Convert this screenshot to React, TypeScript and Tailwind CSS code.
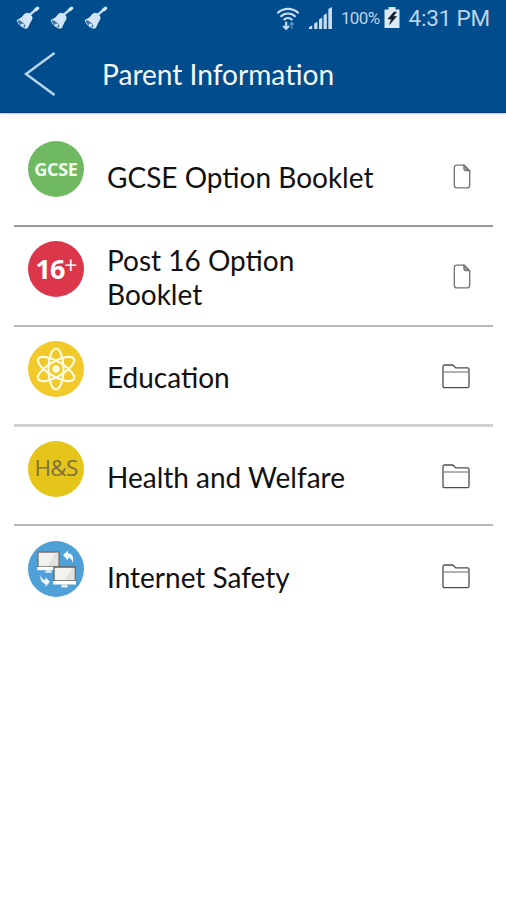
import React from 'react';
import { clsx } from 'clsx';

type RowProps = {
  label: string;
  kind: 'file' | 'folder';
  /** colour of the round badge */
  badgeClass: string;
  dividerClass?: string;
  children: React.ReactNode;
};

const Bell = () => (
  <svg width="24" height="24" viewBox="0 0 24 24" className="block">
    <path d="m13.500 9 7-6" stroke="#c5daee" strokeWidth="2.400" />
    <path d="m20 3.500 1.500-1.300" stroke="#d3e6f5" strokeWidth="3.400" strokeLinecap="round" />
    <path
      d="M.7 14C4.500 12.500 6.500 10.500 8 8.200Q10.500 5.700 13 7.300L16 10q1.500 2.200-.3 4.500c-2 2.500-2.200 4.500-3.700 7.300Q9 24 5 20.500 1 17 .7 14z"
      fill="#d3e6f5"
    />
    <ellipse cx="5.600" cy="17.800" rx="4.800" ry="1.800" transform="rotate(42 5.600 17.800)" fill="#47759e" />
    <circle cx="6.400" cy="19.200" r="1.600" fill="#d3e6f5" />
  </svg>
);

const Wifi = () => (
  <svg width="24" height="25" viewBox="0 0 26 26" fill="none" stroke="#c9dcf0" strokeWidth="2.300">
    <path d="M1.500 7.200c6.500-6.200 16.500-6.200 23 0" />
    <path d="M4.800 11c4.800-4.600 11.600-4.600 16.400 0" />
    <path d="M8.200 14.600c2.900-2.600 6.700-2.600 9.600 0" />
    <path d="M11 16.500V24M7.800 21.200l3.200 3 3.200-3" />
    <path d="M17 24v-6.500M14.800 19.700l2.200-2.200 2.200 2.200" stroke="#5d8cba" strokeWidth="1.600" />
  </svg>
);

const Signal = () => (
  <svg width="23" height="22" viewBox="0 0 23 22" fill="#c9dcf0">
    <path d="M0 22v-2l3.200-1.500V22zM5.200 22v-5.500l3.200-1.700V22zM10 22v-9.500l3.200-2V22zM14.600 22V8.300l3.200-2V22zM19.300 22V2L23 0v22z" />
  </svg>
);

const Battery = () => (
  <svg width="16" height="22" viewBox="0 0 16 22">
    <path d="M4.500 0h7v2.500H15.500V21H.5V2.500h4z" fill="#dceaf5" />
    <path d="M10 5 4 12h3.500L5.500 17.500l7-8H9L12.500 5z" fill="#101b26" stroke="#101b26" strokeWidth=".6" />
  </svg>
);

const FileIcon = () => (
  <svg width="18" height="25" viewBox="0 0 18 26" fill="none" stroke="#757575" strokeWidth="1.400">
    <path d="M11.500 1.200H3.800Q1 1.200 1 4v18q0 2.800 2.800 2.800h10.400Q17 24.800 17 22V7z" />
    <path d="m11 1.500 5.500 5.300h-3.300Q11 6.800 11 4.500z" fill="#aaa" />
  </svg>
);

const FolderIcon = () => (
  <svg width="28" height="25" viewBox="0 0 28 25" fill="none" stroke="#4d4d4d" strokeWidth="1.300">
    <path d="M1 22.200V2.500q0-1.500 1.500-1.500H10q1.200 0 2 1l1.700 1.900H25.500q1.500 0 1.500 1.600v16.700q0 1.500-1.500 1.500h-23Q1 23.700 1 22.200z" />
    <path d="M1 8h26" stroke="#888" />
  </svg>
);

const Atom = () => (
  <svg width="48" height="48" viewBox="-24 -24 48 48" fill="none" stroke="#fffbe0" strokeWidth="2.200">
    <ellipse rx="7.500" ry="20.500" />
    <ellipse rx="7.500" ry="20.500" transform="rotate(60)" />
    <ellipse rx="7.500" ry="20.500" transform="rotate(120)" />
    <circle r="3.700" fill="#fffbe0" stroke="none" />
  </svg>
);

const Computers = () => (
  <svg width="56" height="56" viewBox="0 0 56 56">
    <g>
      <path d="M10 11h21v15H10z" fill="#f2f2ee" stroke="#77736f" strokeWidth="1.300" />
      <path d="M9.300 26h22.400v3.200H9.300z" fill="#fff" />
      <path d="M18 29.200h5l1 2.500h-7z" fill="#e9edf0" />
      <path d="M20 25 27 11.700h3V25z" fill="#e2e2df" />
    </g>
    <g>
      <path d="M26 26h21v14H26z" fill="#f2f2ee" stroke="#66605c" strokeWidth="1.300" />
      <path d="M25 40h23v3.500H25z" fill="#fff" />
      <path d="M34 43.500h5l1 3h-7z" fill="#e9edf0" />
      <path d="m37 39 7-12h2.500v12z" fill="#e2e2df" />
    </g>
    <g fill="#f2faff">
      <path d="m35 14 5-4.500v2.700c4.500.3 6 4 4.500 9.800-.5-3.500-2-5-4.500-5.200v2.700z" />
      <path d="M12.500 34c-.5 5 1.700 8.300 5 8.800v3l4.500-5-4.500-4.400v2.700c-2.500-.3-4-1.800-5-5.100z" />
    </g>
  </svg>
);

const Row: React.FC<RowProps> = ({ label, kind, badgeClass, dividerClass, children }) => (
  <li className="h-[100px]">
    <div className="flex h-[98px] items-center">
      <div
        className={clsx(
          'mb-[14px] ml-[14px] flex h-14 w-14 shrink-0 items-center justify-center rounded-full',
          badgeClass
        )}
      >
        {children}
      </div>
      <span className="mt-[2px] ml-[23px] w-[275px] text-[28px] leading-[34px] text-[#111]">{label}</span>
      <span className={clsx('ml-auto', kind === 'file' ? 'mr-[22px]' : 'mr-[23px]')}>
        {kind === 'file' ? <FileIcon /> : <FolderIcon />}
      </span>
    </div>
    <div className={dividerClass} />
  </li>
);

const App: React.FC = () => (
  <div className="h-[900px] w-[506px] overflow-hidden bg-white font-['Lato',sans-serif]">
    <header className="h-[113px] border-b border-[#063783] bg-[#004c8c] shadow-[0_1px_2px_rgba(60,60,80,0.3)]">
      <div className="flex h-9 items-center justify-between pr-4 pl-4">
        <div className="flex gap-[10px]">
          <Bell />
          <Bell />
          <Bell />
        </div>
        <div className="flex items-center font-['Roboto',sans-serif] text-[#bdd3ea]">
          <Wifi />
          <span className="ml-[9px]">
            <Signal />
          </span>
          <span className="mt-px ml-[9px] text-[17px] tracking-[-0.6px]">100%</span>
          <span className="ml-1 mr-px">
            <Battery />
          </span>
          <span className="mt-px ml-2 text-[22.500px] tracking-[-0.2px]">4:31 PM</span>
        </div>
      </div>
      <div className="flex h-[76px] items-center">
        <svg width="32" height="46" viewBox="0 0 32 46" className="ml-6" fill="none" stroke="#b9d8ef" strokeWidth="2.500">
          <path d="M30.500 2 2 23l28.500 21" />
        </svg>
        <h1 className="mt-px ml-[46px] text-[28.100px] text-[#f4f9ff]">Parent Information</h1>
      </div>
    </header>
    <main className="pr-[13px] pl-[14px] pt-[14px]">
      <ul>
        <Row label="GCSE Option Booklet" kind="file" badgeClass="bg-[#70b963]" dividerClass="h-[2px] bg-[#999]">
          <span className="font-['Open_Sans',sans-serif] text-[18px] font-bold tracking-[-0.3px] text-[#f5fff0]">GCSE</span>
        </Row>
        <Row label="Post 16 Option Booklet" kind="file" badgeClass="bg-[#dc364b]" dividerClass="h-[2px] bg-[#b8b8b8]">
          <span className="flex items-center font-['Open_Sans',sans-serif] text-[27px] font-bold tracking-[-1px] text-white">
            16<span className="mb-2 text-[23px] font-normal">+</span>
          </span>
        </Row>
        <Row label="Education" kind="folder" badgeClass="bg-[#f1c92b]" dividerClass="h-[3px] -mt-px bg-[#d1d1d1]">
          <Atom />
        </Row>
        <Row label="Health and Welfare" kind="folder" badgeClass="bg-[#e5c51a]" dividerClass="h-[2px] -mt-px bg-[#b8b8b8]">
          <span className="mb-[2px] font-['Open_Sans',sans-serif] text-[22.500px] tracking-[-0.7px] text-[#7b7240]">H&amp;S</span>
        </Row>
        <Row label="Internet Safety" kind="folder" badgeClass="bg-[#4ea0d6]">
          <Computers />
        </Row>
      </ul>
    </main>
  </div>
);

export default App;
